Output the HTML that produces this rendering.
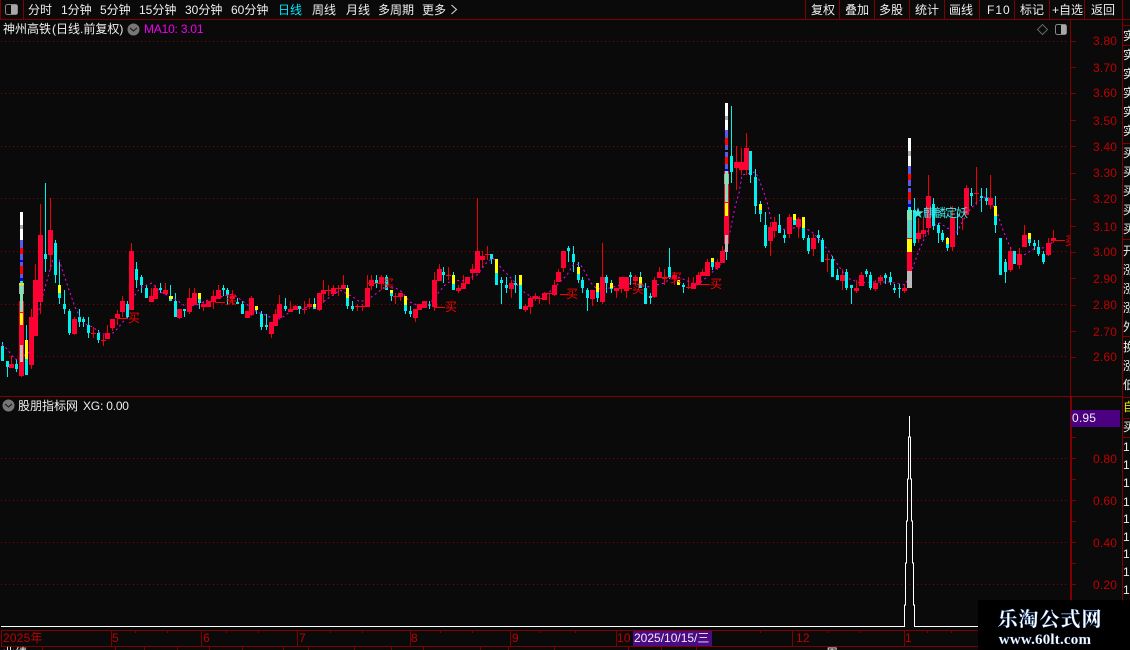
<!DOCTYPE html>
<html><head><meta charset="utf-8"><style>
html,body{margin:0;padding:0;background:#0a0a0a;width:1130px;height:650px;overflow:hidden}
svg{display:block}
text{font-family:"Liberation Sans","WenQuanYi Zen Hei","Noto Sans CJK SC",sans-serif;font-size:12px;fill:#eeeeee}
.p text{fill:#c00000;letter-spacing:.2px}
.m{fill:#ff0000}
</style></head><body>
<svg width="1130" height="650" viewBox="0 0 1130 650" xmlns="http://www.w3.org/2000/svg">
<rect width="1130" height="650" fill="#0a0a0a"/>
<g shape-rendering="crispEdges">
<!-- frame lines -->
<path d="M0 19.5H1130M0 396.5H1122M1 630.5H978M1 646.5H978M1070.5 20V630M1122.5 0V600M23.5 0V19M805.5 0V19M839.5 0V19M874.5 0V19M909.5 0V19M944.5 0V19M979.5 0V19M1014.5 0V19M1049.5 0V19M1084.5 0V19M0.5 0V19M1122 25.5H1130M1122 45.5H1130M1122 143.5H1130M1122 239.5H1130M1122 336.5H1130M1122 397.5H1130M1122 418.5H1130M1122 437.5H1130" stroke="#800000" fill="none"/>
<path d="M1071.5 397V600" stroke="#800000"/>
<path d="M1071 41.5h5M1071 67.5h5M1071 93.5h5M1071 120.5h5M1071 146.5h5M1071 173.5h5M1071 199.5h5M1071 226.5h5M1071 252.5h5M1071 278.5h5M1071 305.5h5M1071 331.5h5M1071 357.5h5M1071 437.5h5M1071 458.5h5M1071 479.5h5M1071 500.5h5M1071 521.5h5M1071 542.5h5M1071 563.5h5M1071 584.5h5M1071 605.5h5" stroke="#800000"/>
<!-- dotted grid -->
<path d="M1 41.5H1068M1 93.5H1068M1 146.5H1068M1 198.5H1068M1 251.5H1068M1 304.5H1068M1 356.5H1068M1 458.5H1068M1 500.5H1068M1 542.5H1068M1 584.5H1068" stroke="#8c0000" stroke-dasharray="1 3" fill="none"/>
<!-- timeline -->
<path d="M111.5 630V646M201.5 630V646M297.5 630V646M410.5 630V646M510.5 630V646M616.5 630V646M904.5 630V646M792.5 630V646M1.5 630V646M135.5 630v3M167.5 630v3M226.5 630v3M258.5 630v3M330.5 630v3M362.5 630v3M440.5 630v3M472.5 630v3M540.5 630v3M575.5 630v3M760.5 630v3M828.5 630v3M860.5 630v3M927.5 630v3M951.5 630v3M42.5 647v3M115.5 647v3M144.5 647v3M177.5 647v3M209.5 647v3M242.5 647v3M283.5 647v3M308.5 647v3M354.5 647v3M391.5 647v3M423.5 647v3M480.5 647v3M508.5 647v3M554.5 647v3M628.5 647v3M661.5 647v3M696.5 647v3" stroke="#800000"/>
<rect x="633" y="631" width="79" height="15" fill="#4b0a86"/>
<rect x="1071" y="410" width="49" height="17" fill="#4b0082"/>
<!-- candle wicks red -->
<path fill="none" stroke="#f00000" d="M11.5 356V368M21.5 301V377M31.5 309V369M35.5 264V336M40.5 204V314M50.5 198V270M74.5 317V335M93.5 327V338M103.5 335V346M107.5 325V339M112.5 319V331M117.5 310V325M122.5 296V317M131.5 243V310M151.5 288V302M155.5 285V299M165.5 283V294M179.5 309V319M189.5 288V314M194.5 288V305M203.5 301V311M208.5 301V307M213.5 290V309M218.5 285V299M232.5 290V305M247.5 311V318M251.5 296V316M271.5 322V338M275.5 309V326M279.5 295V318M290.5 301V312M295.5 305V310M304.5 301V314M309.5 298V309M319.5 293V311M323.5 280V303M328.5 285V296M333.5 285V296M338.5 285V296M343.5 275V289M357.5 304V311M362.5 304V311M367.5 275V307M371.5 275V290M381.5 275V290M395.5 293V304M400.5 293V301M415.5 309V322M419.5 304V310M424.5 301V308M434.5 272V311M439.5 264V281M448.5 267V280M458.5 285V293M463.5 275V289M467.5 277V284M472.5 264V280M477.5 198V273M482.5 251V268M487.5 246V260M511.5 280V298M525.5 304V312M530.5 296V314M535.5 293V301M539.5 296V304M544.5 292V300M549.5 293V304M554.5 280V296M558.5 269V282M563.5 251V272M592.5 290V306M602.5 243V304M616.5 288V298M621.5 277V293M626.5 277V298M635.5 275V285M654.5 277V298M659.5 267V278M664.5 269V285M674.5 272V285M688.5 277V289M693.5 277V289M698.5 272V285M702.5 269V276M707.5 259V276M717.5 259V270M722.5 246V263M736.5 146V190M741.5 148V175M746.5 133V175M770.5 222V256M774.5 217V238M789.5 214V238M798.5 217V238M813.5 234V256M827.5 254V272M842.5 269V290M856.5 280V293M861.5 272V286M875.5 280V291M880.5 275V285M904.5 284V293M918.5 218V243M923.5 218V238M928.5 175V235M952.5 206V251M962.5 218V230M966.5 185V215M976.5 167V205M990.5 175V209M1010.5 248V272M1019.5 248V269M1024.5 225V247M1048.5 238V256M1053.5 230V243"/>
<!-- candle wicks cyan -->
<path fill="none" stroke="#00f0f0" d="M2.5 342V361M7.5 361V377M16.5 359V372M26.5 325V375M45.5 183V272M55.5 240V283M59.5 262V304M64.5 290V314M69.5 309V335M79.5 309V327M83.5 317V327M88.5 317V338M98.5 330V343M127.5 301V319M136.5 262V288M141.5 275V293M146.5 285V298M160.5 283V293M170.5 285V301M175.5 293V317M184.5 309V317M199.5 293V309M223.5 285V296M227.5 288V305M237.5 298V304M242.5 301V314M256.5 306V314M261.5 311V330M266.5 314V330M285.5 298V311M299.5 306V314M314.5 298V309M347.5 285V309M352.5 301V311M376.5 275V288M386.5 275V290M391.5 290V301M405.5 296V314M410.5 306V317M429.5 301V309M443.5 267V283M453.5 272V290M491.5 254V264M496.5 259V285M501.5 277V304M506.5 277V293M515.5 275V293M520.5 283V309M568.5 246V262M573.5 246V272M578.5 262V283M582.5 277V293M587.5 288V311M597.5 289V302M606.5 275V293M611.5 280V293M630.5 272V285M640.5 272V288M645.5 283V304M650.5 293V304M669.5 248V279M683.5 283V293M712.5 259V270M726.5 245V260M731.5 106V183M750.5 151V183M755.5 169V214M760.5 201V222M765.5 212V248M779.5 214V233M784.5 230V243M794.5 214V225M803.5 217V240M808.5 235V254M818.5 230V243M822.5 238V262M832.5 256V277M837.5 269V280M846.5 269V290M851.5 285V304M866.5 269V277M870.5 272V290M885.5 273V284M890.5 272V285M894.5 284V293M899.5 284V298M914.5 198V246M933.5 198V230M938.5 223V243M942.5 230V242M947.5 237V251M957.5 212V235M971.5 188V206M981.5 188V212M986.5 188V205M995.5 196V233M1000.5 238V275M1005.5 259V283M1014.5 251V264M1029.5 233V246M1034.5 240V250M1038.5 240V256M1043.5 251V264"/>
<!-- moving average -->
<path fill="none" stroke="#ff00ff" stroke-dasharray="2 3" shape-rendering="auto" d="M2 344L8 350L13 357L17 360L30 352L38 313L43 295L48 277L53 259L59 259L63 272L68 287L75 307L80 317L87 325L93 327L100 333L107 335L113 333L118 328L127 317L135 295L140 288L147 285L152 283L160 292L167 295L178 301L185 306L197 305L208 300L220 297L233 294L245 303L257 312L263 314L270 317L280 319L287 314L297 308L305 308L323 302L330 297L340 290L353 297L360 302L370 298L377 293L387 285L400 290L410 302L417 305L427 307L439 292L445 285L452 280L462 281L477 275L487 262L493 258L503 270L510 277L525 293L532 297L543 298L560 282L567 275L573 265L580 264L585 272L591 283L597 289L610 288L620 285L632 283L647 287L665 283L673 275L683 279L697 285L707 277L720 265L730 232L735 207L739 193L742 175L755 172L758 177L763 190L767 202L770 215L773 225L780 230L793 228L805 228L812 232L820 240L830 253L838 265L847 278L860 283L873 282L890 282L905 285L913 267L918 253L925 237L930 227L940 223L947 228L957 232L967 213L977 202L987 196L997 212L1003 230L1010 247L1020 258L1027 253L1037 247L1043 248L1053 242"/>
<!-- red bodies -->
<path fill="none" stroke="#ff0033" stroke-width="5" d="M11.5 364V368M21.5 301V376M31.5 317V365M35.5 280V336M40.5 235V302M50.5 230V255M74.5 319V334M93.5 333V334M103.5 340V341M107.5 333V339M112.5 319V328M117.5 314V318M122.5 301V312M131.5 251V310M151.5 296V302M155.5 288V299M165.5 290V294M179.5 309V318M189.5 298V312M194.5 293V305M203.5 304V307M208.5 301V307M213.5 296V302M218.5 290V299M232.5 296V299M247.5 311V318M251.5 298V315M271.5 322V334M275.5 314V326M279.5 304V318M290.5 309V312M295.5 306V310M304.5 309V310M309.5 304V307M319.5 293V310M323.5 290V294M328.5 290V291M333.5 288V294M338.5 288V289M343.5 285V289M357.5 306V307M362.5 306V307M367.5 288V307M371.5 280V286M381.5 277V284M395.5 296V297M400.5 293V297M415.5 309V318M419.5 304V310M424.5 301V308M434.5 280V307M439.5 269V281M448.5 275V276M458.5 288V291M463.5 283V289M467.5 277V284M472.5 269V273M477.5 251V273M482.5 256V260M487.5 254V255M511.5 283V289M525.5 306V310M530.5 298V307M535.5 296V299M539.5 298V299M544.5 293V300M549.5 293V294M554.5 285V295M558.5 272V282M563.5 251V268M592.5 290V299M602.5 277V302M616.5 288V291M621.5 277V289M626.5 277V291M635.5 277V281M654.5 280V297M659.5 272V278M664.5 278V279M674.5 275V279M688.5 287V288M693.5 283V289M698.5 275V285M702.5 272V276M707.5 262V276M717.5 262V268M722.5 251V263M736.5 162V168M741.5 162V170M746.5 148V170M770.5 227V241M774.5 222V231M789.5 217V234M798.5 219V227M813.5 238V249M827.5 259V260M842.5 275V281M856.5 288V291M861.5 275V286M875.5 283V289M880.5 277V281M904.5 288V291M918.5 233V239M923.5 230V234M928.5 196V228M952.5 218V247M966.5 188V215M976.5 193V194M990.5 198V205M1010.5 251V270M1019.5 254V265M1024.5 235V247M1048.5 243V255M1053.5 238V241"/>
<!-- cyan bodies -->
<path fill="none" stroke="#00f0f0" stroke-width="3" d="M2.5 346V361M7.5 361V367M16.5 364V369M26.5 359V375M45.5 254V259M55.5 243V275M59.5 293V298M64.5 304V309M69.5 311V333M79.5 317V322M83.5 319V322M88.5 325V333M98.5 333V340M127.5 304V317M136.5 269V280M141.5 277V285M146.5 288V298M160.5 288V290M170.5 299V301M175.5 301V317M184.5 309V311M199.5 299V303M223.5 288V290M227.5 290V295M237.5 302V304M242.5 304V314M256.5 306V310M261.5 314V327M266.5 325V327M285.5 306V309M299.5 306V309M314.5 307V309M347.5 298V306M352.5 306V309M376.5 280V283M386.5 277V290M391.5 293V296M405.5 305V311M410.5 311V314M429.5 304.5V305.5M443.5 272V275M453.5 284V290M491.5 254V259M496.5 273V285M501.5 280V283M506.5 285V288M515.5 283V285M520.5 285V309M568.5 248V251M573.5 254V262M578.5 274V280M582.5 280V288M587.5 290V298M597.5 292V298M606.5 277V283M611.5 288V289M630.5 275V277M640.5 285V288M645.5 288V304M650.5 296V298M669.5 267V277M683.5 285V287M712.5 262V267M731.5 156V172M750.5 151V175M755.5 177V206M760.5 210V214M765.5 225V246M779.5 225V233M784.5 235V238M794.5 220V225M803.5 228V238M808.5 238V251M818.5 235V238M822.5 240V262M832.5 259V277M837.5 275V280M846.5 272V288M851.5 285V288M866.5 271V274M870.5 275V288M885.5 275V278M890.5 277V282M894.5 288V290M899.5 288V289M914.5 210V243M933.5 204V226M938.5 225V233M942.5 233V240M947.5 244V248M971.5 193V196M981.5 196V198M986.5 198V201M995.5 216V225M1000.5 238V275M1005.5 262V272M1014.5 251V264M1029.5 239V243M1034.5 243V246M1038.5 247V254M1043.5 254V262"/>
<!-- yellow bodies -->
<path fill="none" stroke="#ffff00" stroke-width="3" d="M26.5 340V359M59.5 285V293M170.5 296V299M199.5 293V299M256.5 306V310M314.5 304V307M347.5 288V298M391.5 290V293M405.5 296V305M496.5 259V273M578.5 267V274M597.5 283V292M611.5 283V288M640.5 277V285M678.5 280V285M712.5 258V262M760.5 204V210M794.5 214V220M803.5 217V228M947.5 238V244M995.5 206V216M1029.5 233V239M453.5 275V284M520.5 275V285M171.5 296V299"/>
<!-- limit-up stack 1 -->
<rect x="19" y="301" width="5" height="75" fill="#ff0033"/>
<rect x="20" y="212" width="3" height="13" fill="#fff"/><rect x="20" y="225" width="3" height="4" fill="#aaa"/><rect x="20" y="229" width="3" height="11" fill="#fff"/><rect x="20" y="240" width="3" height="8" fill="#5a5ae6"/><rect x="20" y="248" width="3" height="6" fill="#f00"/><rect x="20" y="254" width="3" height="6" fill="#5a5ae6"/><rect x="20" y="260" width="3" height="2" fill="#0000ee"/><rect x="20" y="262" width="3" height="4" fill="#5a5ae6"/><rect x="20" y="266" width="3" height="8" fill="#f00"/><rect x="20" y="274" width="3" height="4" fill="#5a5ae6"/><rect x="20" y="278" width="3" height="3" fill="#0000ee"/><rect x="20" y="281" width="3" height="4" fill="#00f0f0"/>
<rect x="19" y="283" width="5" height="2" fill="#e6e600"/><rect x="19" y="285" width="5" height="9" fill="#aaa"/><rect x="20" y="285" width="3" height="27" fill="#7fe5b5"/>
<rect x="20" y="313" width="3" height="12" fill="#ff0"/><rect x="20" y="345" width="3" height="17" fill="#bbb"/>
<!-- stack 2 -->
<rect x="724" y="171" width="5" height="73" fill="#ff0033"/>
<rect x="725" y="103" width="3" height="13" fill="#fff"/><rect x="725" y="116" width="3" height="4" fill="#aaa"/><rect x="725" y="120" width="3" height="10" fill="#fff"/><rect x="725" y="130" width="3" height="8" fill="#5a5ae6"/><rect x="725" y="138" width="3" height="7" fill="#f00"/><rect x="725" y="145" width="3" height="5" fill="#5a5ae6"/><rect x="725" y="152" width="3" height="5" fill="#5a5ae6"/><rect x="725" y="157" width="3" height="7" fill="#f00"/><rect x="725" y="164" width="3" height="5" fill="#5a5ae6"/><rect x="725" y="169" width="3" height="3" fill="#0000ee"/>
<rect x="724" y="174" width="5" height="10" fill="#aaa"/><rect x="725" y="171" width="3" height="31" fill="#7fe5b5"/>
<rect x="725" y="203" width="3" height="13" fill="#ff0"/><rect x="725" y="235" width="3" height="17" fill="#bbb"/>
<!-- stack 3 -->
<rect x="907" y="210" width="5" height="78" fill="#ff0033"/>
<rect x="908" y="138" width="3" height="13" fill="#fff"/><rect x="908" y="151" width="3" height="5" fill="#aaa"/><rect x="908" y="156" width="3" height="10" fill="#fff"/><rect x="908" y="166" width="3" height="8" fill="#5a5ae6"/><rect x="908" y="174" width="3" height="6" fill="#f00"/><rect x="908" y="180" width="3" height="6" fill="#5a5ae6"/><rect x="908" y="188" width="3" height="4" fill="#5a5ae6"/><rect x="908" y="192" width="3" height="8" fill="#f00"/><rect x="908" y="200" width="3" height="4" fill="#5a5ae6"/><rect x="908" y="204" width="3" height="3" fill="#0000ee"/><rect x="908" y="207" width="3" height="3" fill="#00f0f0"/>
<rect x="907" y="210" width="5" height="10" fill="#7fe5b5"/><rect x="907" y="220" width="5" height="18" fill="#aaa"/><rect x="908" y="220" width="3" height="18" fill="#40e0d0"/>
<rect x="907" y="239" width="5" height="13" fill="#ff0"/><rect x="907" y="271" width="5" height="17" fill="#bbb"/>
<!-- buy marker lines -->
<path fill="none" stroke="#ff0000" d="M117 318.5h11M215 302.5h10M434 307.5h11M560 294.5h8M622 288.5h10M660 277.5h10M699 284.5h11M368 283.5h14"/>
<path d="M1052 240.5h13" stroke="#ff0000"/>
<!-- pulse -->
<path fill="none" stroke="#fff" d="M1 626.5H904.5V605H905.5V563H906.5V521H907.5V479H908.5V437H909.5V416V437H910.5V479H911.5V521H912.5V563H913.5V605H914.5V626.5H978"/>
</g>
<!-- buy text -->
<g class="b">
<text x="128" y="322" class="m">买</text><text x="225" y="304" class="m">买</text><text x="445" y="311" class="m">买</text><text x="566" y="298" class="m">买</text><text x="632" y="293" class="m">买</text><text x="670" y="282" class="m">买</text><text x="710" y="288" class="m">买</text><text x="382" y="288" class="m">买</text>
<svg x="1064" y="230" width="6" height="20"><text x="1" y="15" class="m">买</text></svg>
</g>
<text x="912" y="217" style="fill:#40e8e8;letter-spacing:-1px">★麒麟定妖</text>
<!-- toolbar -->
<rect x="5.500" y="4.500" width="12" height="10" rx="2" fill="none" stroke="#888"/><rect x="11" y="5" width="6" height="9" fill="#a8a8a8"/>
<text x="28" y="14">分时</text><text x="61" y="14">1分钟</text><text x="100" y="14">5分钟</text><text x="139" y="14">15分钟</text><text x="185" y="14">30分钟</text><text x="231" y="14">60分钟</text><text x="278" y="14" style="fill:#00e6ff">日线</text><text x="312" y="14">周线</text><text x="346" y="14">月线</text><text x="378" y="14">多周期</text><text x="422" y="14">更多</text>
<path d="M451.500 5l5 4.500-5 4.500" fill="none" stroke="#ddd"/>
<text x="811" y="14">复权</text><text x="845" y="14">叠加</text><text x="879" y="14">多股</text><text x="915" y="14">统计</text><text x="949" y="14">画线</text><text x="987" y="14" style="letter-spacing:1px">F10</text><text x="1020" y="14">标记</text><text x="1052" y="14">+自选</text><text x="1091" y="14">返回</text>
<!-- title -->
<text x="3" y="33">神州高铁</text><text x="52" y="33">(日线.前复权)</text>
<circle cx="133.500" cy="29.500" r="6" fill="#777"/><path d="M130 28l3.500 3 3.500-3" fill="none" stroke="#222" stroke-width="1.200"/>
<text x="144" y="33" style="fill:#f000f0;letter-spacing:-.2px">MA10: 3.01</text>
<path d="M1042.500 24.500l5 5-5 5-5-5z" fill="none" stroke="#666"/>
<rect x="1055.500" y="24.500" width="11" height="10" rx="2" fill="none" stroke="#888"/><rect x="1061" y="25" width="5" height="9" fill="#a8a8a8"/>
<!-- axis labels -->
<g class="p">
<text x="1093" y="45">3.80</text><text x="1093" y="72">3.70</text><text x="1093" y="97">3.60</text><text x="1093" y="125">3.50</text><text x="1093" y="151">3.40</text><text x="1093" y="177">3.30</text><text x="1093" y="203">3.20</text><text x="1093" y="231">3.10</text><text x="1093" y="256">3.00</text><text x="1093" y="283">2.90</text><text x="1093" y="309">2.80</text><text x="1093" y="336">2.70</text><text x="1093" y="361">2.60</text>
<text x="1093" y="463">0.80</text><text x="1093" y="505">0.60</text><text x="1093" y="547">0.40</text><text x="1093" y="589">0.20</text>
<text x="3" y="642">2025年</text><text x="112" y="642">5</text><text x="203" y="642">6</text><text x="299" y="642">7</text><text x="411" y="642">8</text><text x="512" y="642">9</text><text x="617" y="642">10</text><text x="796" y="642">12</text><text x="905" y="642">1</text>
</g>
<text x="1072" y="422" style="letter-spacing:.2px">0.95</text>
<text x="634" y="642" style="letter-spacing:0">2025/10/15/三</text>
<!-- lower title -->
<circle cx="8.500" cy="405.500" r="6" fill="#777"/><path d="M5 404l3.500 3 3.500-3" fill="none" stroke="#222" stroke-width="1.200"/>
<text x="18" y="410">股朋指标网</text><text x="83" y="410" style="letter-spacing:-.2px">XG: 0.00</text>
<!-- clipped right strip -->
<svg x="1123" y="0" width="7" height="650">
<text x="0" y="40">实</text><text x="0" y="59">实</text><text x="0" y="78">实</text><text x="0" y="97">实</text><text x="0" y="116">实</text><text x="0" y="135">实</text><text x="0" y="157">买</text><text x="0" y="176">买</text><text x="0" y="195">买</text><text x="0" y="214">买</text><text x="0" y="233">买</text><text x="0" y="255">开</text><text x="0" y="274">涨</text><text x="0" y="293">涨</text><text x="0" y="312">涨</text><text x="0" y="331">外</text><text x="0" y="351">换</text><text x="0" y="370">涨</text><text x="0" y="389">低</text>
<text x="0" y="411" style="fill:#e6e600">自</text><text x="0" y="431">买</text>
<text x="0" y="451">1</text><text x="0" y="469">1</text><text x="0" y="487">1</text><text x="0" y="506">1</text><text x="0" y="523">1</text><text x="0" y="541">1</text><text x="0" y="558">1</text><text x="0" y="576">1</text><text x="0" y="594">1</text>
</svg>
<!-- clipped bottom row -->
<text x="3" y="657">业绩</text><text x="826" y="657">周</text>
<!-- watermark -->
<rect x="978" y="600" width="152" height="50" fill="#000"/>
<text x="1050" y="626" text-anchor="middle" style="font-family:'Noto Serif CJK SC','Liberation Serif',serif;font-size:20px;font-weight:700;fill:#fff;letter-spacing:1px;stroke:#3a6fc0;stroke-width:.3px">乐淘公式网</text>
<text x="1045" y="644" text-anchor="middle" style="font-family:'Liberation Serif',serif;font-size:15px;font-weight:700;fill:#fff;letter-spacing:.2px;stroke:#3a6fc0;stroke-width:.2px">www.60lt.com</text>
</svg>
</body></html>
